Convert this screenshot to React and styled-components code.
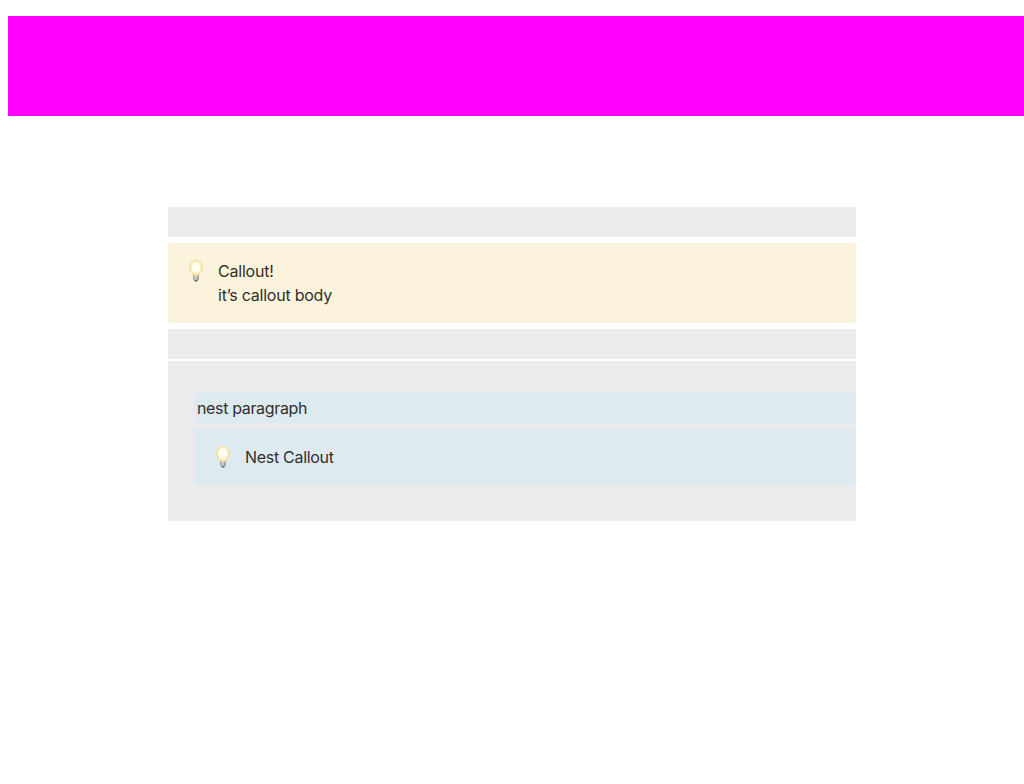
import React, { useId } from "react";
import styled, { createGlobalStyle } from "styled-components";

const GlobalStyle = createGlobalStyle`
  *, *::before, *::after { box-sizing: border-box; }
  body {
    margin: 16px 0 0 8px;
    background: #fff;
    color: #32302c;
    font-family: Inter, "Liberation Sans", sans-serif;
    font-size: 16px;
    line-height: 24px;
    overflow: hidden;
  }
`;

const Cover = styled.div`
  height: 100px;
  background: #ff00ff;
`;

const Page = styled.main`
  width: 688px;
  margin: 91px 0 0 160px;
`;

const tones = { gray: "#eaebed", blue: "#ddeaef", yellow: "#fbf3db" };

const Block = styled.div`
  min-height: 30px;
  padding: 3px 2px;
  background: ${(p) => tones[p.$tone]};
`;

const Nest = styled.section`
  margin-top: 2px;
  height: 160px;
  padding: 32px 0 0 27px;
  background: ${tones.gray};
`;

const CalloutBox = styled.div`
  display: flex;
  margin: 6px 0;
  padding: 16px 16px 16px 12px;
  border-radius: 3px;
  background: ${(p) => tones[p.$tone]};
`;

const IconSlot = styled.span`
  display: flex;
  align-items: center;
  justify-content: center;
  width: 32px;
  height: 24px;
`;

const Body = styled.div`
  margin-left: 6px;
`;

const Line = styled.div`
  letter-spacing: ${(p) => p.$tracking || "-0.35px"};
`;

function Bulb() {
  const id = useId();
  return (
    <svg width="14" height="22" viewBox="0 0 14 22" aria-hidden="true">
      <defs>
        <radialGradient id={id + "g"} cx="50%" cy="44%" r="56%">
          <stop offset="0" stopColor="#fffffc" />
          <stop offset="0.5" stopColor="#fffcee" />
          <stop offset="0.75" stopColor="#fdf0c0" />
          <stop offset="1" stopColor="#f2d583" />
        </radialGradient>
        <linearGradient id={id + "m"}>
          <stop offset="0" stopColor="#999995" />
          <stop offset="0.4" stopColor="#e0e0dc" />
          <stop offset="1" stopColor="#92928f" />
        </linearGradient>
      </defs>
      <path
        d="M7 .8C3.400.800.700 3.500.700 7c0 2.200 1 3.600 1.900 5.200.8 1.300 1.200 2.600 1.600 3.600h5.600c.4-1 .8-2.300 1.600-3.600.9-1.600 1.900-3 1.900-5.200C13.300 3.500 10.600.8 7 .8Z"
        fill={`url(#${id}g)`}
        stroke="#f4da8c"
        strokeWidth=".8"
      />
      <path d="M4 15.200q3 1 6 0v3.500q0 1-1 1.400H5q-1-.4-1-1.400Z" fill={`url(#${id}m)`} />
      <path d="M4.200 17.700q2.800.8 5.600 0" stroke="#a0a09b" strokeWidth=".5" fill="none" />
      <path d="M4.700 19.700h4.600L8.400 21.300q-1.400.8-2.800 0Z" fill="#70716f" />
    </svg>
  );
}

function Callout({ tone, lines }) {
  return (
    <CalloutBox $tone={tone}>
      <IconSlot><Bulb /></IconSlot>
      <Body>
        {lines.map(({ text, tracking }) => (
          <Line key={text} $tracking={tracking}>{text}</Line>
        ))}
      </Body>
    </CalloutBox>
  );
}

export default function App() {
  return (
    <>
      <GlobalStyle />
      <Cover />
      <Page>
        <Block $tone="gray" />
        <Callout
          tone="yellow"
          lines={[
            { text: "Callout!", tracking: "-0.22px" },
            { text: "it’s callout body", tracking: "-0.24px" },
          ]}
        />
        <Block $tone="gray" />
        <Nest>
          <Block $tone="blue"><Line>nest paragraph</Line></Block>
          <Callout tone="blue" lines={[{ text: "Nest Callout", tracking: "-0.3px" }]} />
        </Nest>
      </Page>
    </>
  );
}
